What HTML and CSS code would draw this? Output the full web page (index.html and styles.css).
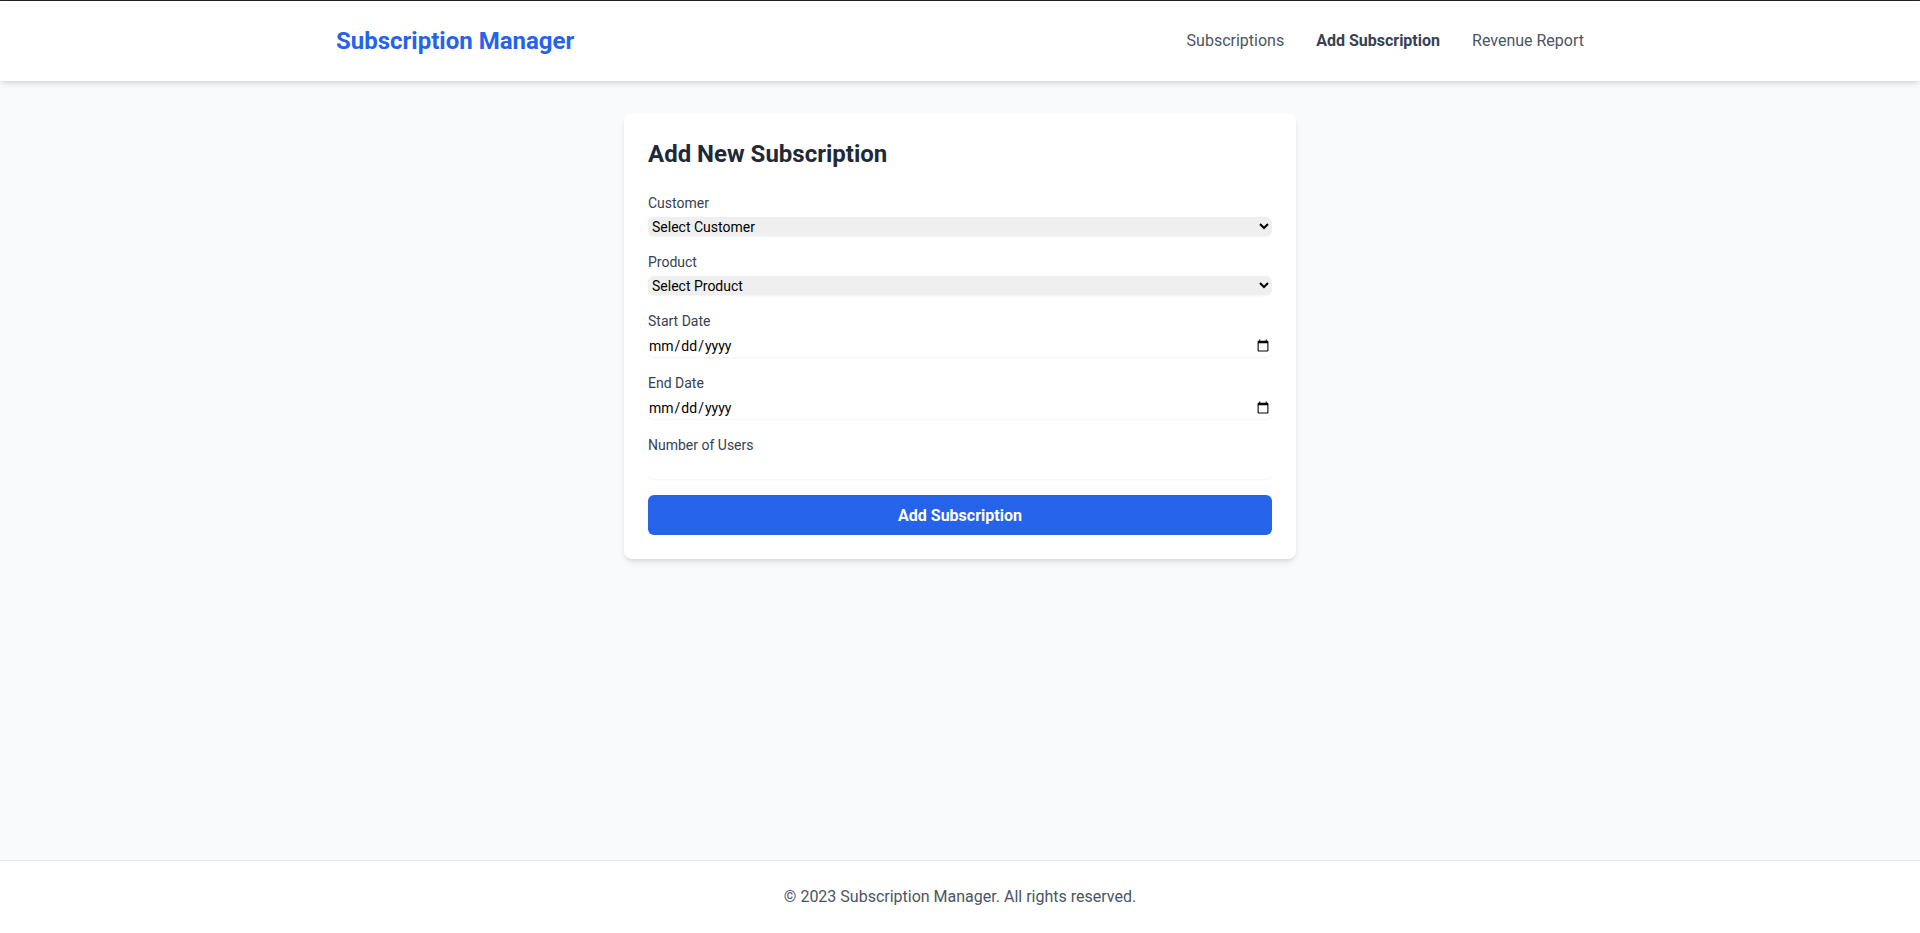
FILE: index.html
```html
<!DOCTYPE html>
<html lang="en">
<head>
<meta charset="utf-8">
<title>Subscription Manager</title>
<link rel="stylesheet" href="styles.css">
</head>
<body>
<div class="page">
  <header class="header">
    <div class="container header-inner">
      <a class="brand" href="#">Subscription Manager</a>
      <nav class="nav">
        <a href="#" class="nav-link">Subscriptions</a>
        <a href="#" class="nav-link active">Add Subscription</a>
        <a href="#" class="nav-link">Revenue Report</a>
      </nav>
    </div>
  </header>
  <main class="main">
    <div class="card">
      <h1 class="card-title">Add New Subscription</h1>
      <form class="form">
        <div class="field">
          <label class="label" for="customer">Customer</label>
          <select id="customer" class="control select">
            <option>Select Customer</option>
          </select>
        </div>
        <div class="field">
          <label class="label" for="product">Product</label>
          <select id="product" class="control select">
            <option>Select Product</option>
          </select>
        </div>
        <div class="field">
          <label class="label" for="start">Start Date</label>
          <input id="start" type="date" class="control date">
        </div>
        <div class="field">
          <label class="label" for="end">End Date</label>
          <input id="end" type="date" class="control date">
        </div>
        <div class="field">
          <label class="label" for="users">Number of Users</label>
          <input id="users" type="number" class="control number">
        </div>
        <button type="button" class="submit">Add Subscription</button>
      </form>
    </div>
  </main>
  <footer class="footer">
    <p>© 2023 Subscription Manager. All rights reserved.</p>
  </footer>
</div>
</body>
</html>
```
FILE: styles.css
```css
* { box-sizing: border-box; }
html, body { margin: 0; padding: 0; }
body {
  font-family: Roboto, "Liberation Sans", Arial, sans-serif;
  font-size: 16px;
  line-height: 1.5;
  color: #111827;
  background: #f9fafb;
}
.page {
  min-height: 933px;
  display: flex;
  flex-direction: column;
  border-top: 1px solid #1f2328;
}
.container {
  max-width: 1280px;
  margin: 0 auto;
  padding: 0 16px;
  width: 100%;
}
.header {
  background: #fff;
  box-shadow: 0 4px 6px -1px rgba(0,0,0,0.1), 0 2px 4px -2px rgba(0,0,0,0.1);
  position: relative;
  z-index: 1;
}
.header-inner {
  height: 80px;
  display: flex;
  align-items: center;
  justify-content: space-between;
}
.brand {
  font-size: 24px;
  line-height: 32px;
  font-weight: 700;
  color: #2563eb;
  text-decoration: none;
}
.nav {
  display: flex;
  gap: 32px;
}
.nav-link {
  color: #4b5563;
  text-decoration: none;
  font-size: 16px;
}
.nav-link.active {
  color: #374151;
  font-weight: 700;
}
.main {
  flex: 1;
  padding: 32px 16px;
}
.card {
  max-width: 672px;
  margin: 0 auto;
  background: #fff;
  border-radius: 8px;
  box-shadow: 0 4px 6px -1px rgba(0,0,0,0.1), 0 2px 4px -2px rgba(0,0,0,0.1);
  padding: 24px;
}
.card-title {
  margin: 0 0 24px;
  padding-top: 1px;
  font-size: 24px;
  line-height: 32px;
  font-weight: 700;
  color: #1f2937;
}
.form { margin: 0; margin-top: -1px; }
.field { margin-bottom: 16px; }
.label {
  display: block;
  font-size: 14px;
  line-height: 20px;
  color: #374151;
}
.control {
  display: block;
  width: 100%;
  margin-top: 4px;
  border: none;
  border-radius: 6px;
  box-shadow: 0 1px 2px 0 rgba(0,0,0,0.05);
  font-family: inherit;
  font-size: 14px;
  color: #000;
  padding: 0;
  outline: none;
}
.select {
  height: 19px;
  background-color: #efefef;
}
.date {
  height: 22px;
  background: #fff;
}
.number {
  height: 20px;
  background: #fff;
}
.submit {
  display: block;
  width: 100%;
  height: 40px;
  border: none;
  border-radius: 6px;
  background: #2563eb;
  color: #fff;
  font-family: inherit;
  font-size: 16px;
  font-weight: 700;
  cursor: pointer;
}
.footer {
  background: #fff;
  border-top: 1px solid #e5e7eb;
  padding: 24px 16px;
  text-align: center;
}
.footer p {
  margin: 0;
  color: #4b5563;
  font-size: 16px;
  line-height: 24px;
}
```
